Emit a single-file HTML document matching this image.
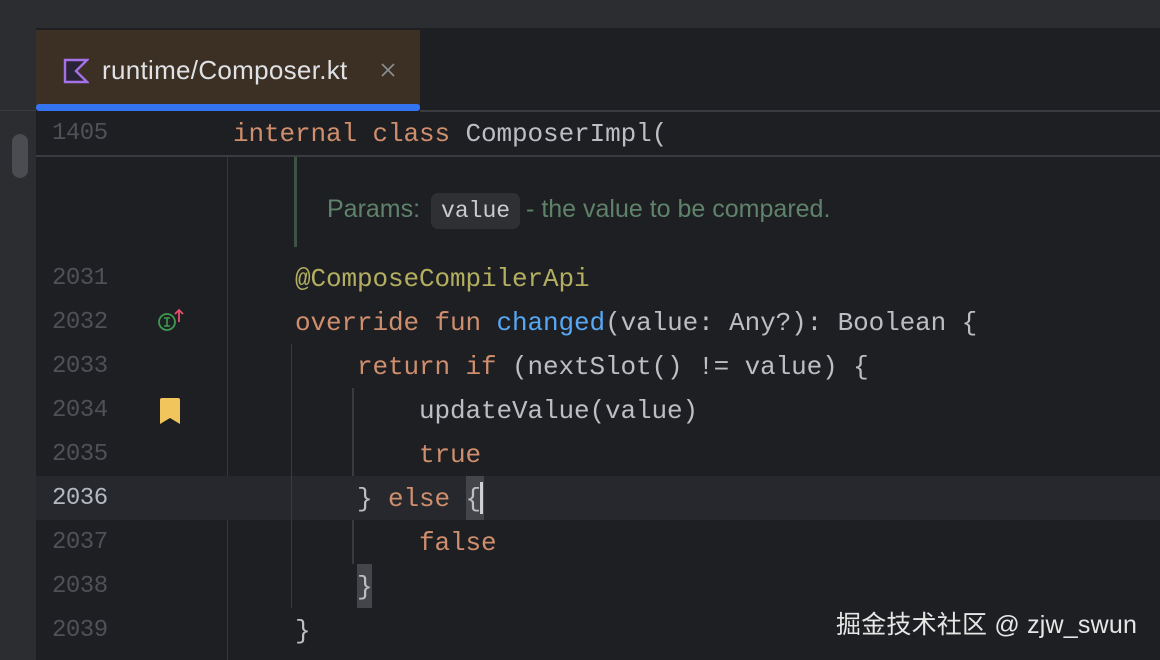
<!DOCTYPE html>
<html><head><meta charset="utf-8"><style>
*{margin:0;padding:0;box-sizing:border-box}
body{width:1160px;height:660px;background:#1e1f22;overflow:hidden;position:relative;font-family:"Liberation Mono",monospace}
.abs{position:absolute}
.ln{position:absolute;left:52px;width:60px;font-size:24px;line-height:44px;color:#4e5157;letter-spacing:-0.5px}
.cd{position:absolute;font-size:26px;line-height:44px;color:#bcbec4;white-space:pre;letter-spacing:-0.1px}
.k{color:#cf8e6d}.f{color:#56a8f5}.a{color:#b3ae60}
</style></head><body>
<div class="abs" style="left:0;top:0;width:1160px;height:28px;background:#2b2d30"></div>
<div class="abs" style="left:0;top:28px;width:1160px;height:82px;background:#1e1f22"></div>
<div class="abs" style="left:0;top:28px;width:36px;height:632px;background:#2b2d30"></div>
<div class="abs" style="left:0;top:110px;width:36px;height:1px;background:#393b40"></div>
<div class="abs" style="left:12px;top:134px;width:16px;height:44px;border-radius:8px;background:#4a4c51"></div>
<div class="abs" style="left:36px;top:30px;width:384px;height:76px;background:#3c3024"></div>
<div class="abs" style="left:36px;top:104px;width:384px;height:7px;border-radius:3px;background:#3574f0"></div>
<div class="abs" style="left:420px;top:110px;width:740px;height:2px;background:#393b40"></div>
<svg class="abs" style="left:63px;top:58px" width="26" height="26" viewBox="0 0 26 26"><path d="M2 2H24L13 13L24 24H2Z" fill="#2a2438" stroke="#a571e6" stroke-width="2.4" stroke-linejoin="miter"/></svg>
<div class="abs" style="left:102px;top:53px;font-family:'Liberation Sans',sans-serif;font-size:26px;letter-spacing:0.3px;color:#dfe1e5;line-height:34px">runtime/Composer.kt</div>
<svg class="abs" style="left:380px;top:62px" width="16" height="16" viewBox="0 0 16 16"><path d="M2 2L14 14M14 2L2 14" stroke="#8c8f94" stroke-width="1.6"/></svg>
<div class="abs" style="left:36px;top:112px;width:1124px;height:44px;background:#1e1f22"></div>
<div class="abs" style="left:36px;top:155px;width:1124px;height:2px;background:#393b40"></div>
<div class="ln" style="top:112px">1405</div>
<div class="cd" style="left:233px;top:112px"><span class="k">internal class</span> ComposerImpl(</div>
<div class="abs" style="left:227px;top:157px;width:1px;height:503px;background:#34363b"></div>
<div class="abs" style="left:294px;top:157px;width:3px;height:90px;background:#3d5444"></div>
<div class="abs" style="left:327px;top:191px;font-family:'Liberation Sans',sans-serif;font-size:25px;color:#5f826b;line-height:36px;white-space:pre">Params: <span style="display:inline-block;background:#2e3034;color:#c9cbcf;border-radius:7px;padding:0 10px;font-family:'Liberation Mono',monospace;font-size:23px;margin:0 6px 0 4px">value</span>- the value to be compared.</div>
<div class="abs" style="left:36px;top:476px;width:1124px;height:44px;background:#26282e"></div>
<div class="abs" style="left:291px;top:344px;width:1px;height:264px;background:#393b40"></div>
<div class="abs" style="left:352px;top:388px;width:2px;height:88px;background:#393b40"></div>
<div class="abs" style="left:352px;top:520px;width:2px;height:44px;background:#393b40"></div>
<div class="ln" style="top:257px">2031</div>
<div class="ln" style="top:301px">2032</div>
<div class="ln" style="top:345px">2033</div>
<div class="ln" style="top:389px">2034</div>
<div class="ln" style="top:433px">2035</div>
<div class="ln" style="top:477px;color:#b4b8bf">2036</div>
<div class="ln" style="top:521px">2037</div>
<div class="ln" style="top:565px">2038</div>
<div class="ln" style="top:609px">2039</div>
<svg class="abs" style="left:155px;top:308px" width="32" height="28" viewBox="0 0 32 28"><circle cx="12" cy="14" r="8" fill="none" stroke="#3d9a50" stroke-width="1.8"/><path d="M9 10H15M12 10V18M9 18H15" stroke="#3d9a50" stroke-width="1.6"/><path d="M24 14V2M20 6L24 2L28 6" stroke="#e5506b" stroke-width="1.8" fill="none"/></svg>
<svg class="abs" style="left:160px;top:398px" width="20" height="26" viewBox="0 0 20 26"><path d="M0 2Q0 0 2 0H18Q20 0 20 2V26L10 20L0 26Z" fill="#f2c55c"/></svg>
<div class="cd" style="left:295px;top:257px"><span class="a">@ComposeCompilerApi</span></div>
<div class="cd" style="left:295px;top:301px"><span class="k">override fun</span> <span class="f">changed</span>(value: Any?): Boolean {</div>
<div class="cd" style="left:357px;top:345px"><span class="k">return if</span> (nextSlot() != value) {</div>
<div class="cd" style="left:419px;top:389px">updateValue(value)</div>
<div class="cd" style="left:419px;top:433px"><span class="k">true</span></div>
<div class="abs" style="left:466px;top:476px;width:18px;height:44px;background:#43454a"></div>
<div class="abs" style="left:480px;top:482px;width:3px;height:32px;background:#ced0d6"></div>
<div class="cd" style="left:357px;top:477px">} <span class="k">else</span> {</div>
<div class="cd" style="left:419px;top:521px"><span class="k">false</span></div>
<div class="abs" style="left:357px;top:564px;width:15px;height:44px;background:#43454a"></div>
<div class="cd" style="left:357px;top:565px">}</div>
<div class="cd" style="left:295px;top:609px">}</div>
<div class="abs" style="left:836px;top:608px;font-family:'Liberation Sans','Noto Sans CJK SC',sans-serif;font-size:25px;letter-spacing:0.2px;color:#e6e6e6;line-height:34px;white-space:pre">掘金技术社区 @ zjw_swun</div>
</body></html>
